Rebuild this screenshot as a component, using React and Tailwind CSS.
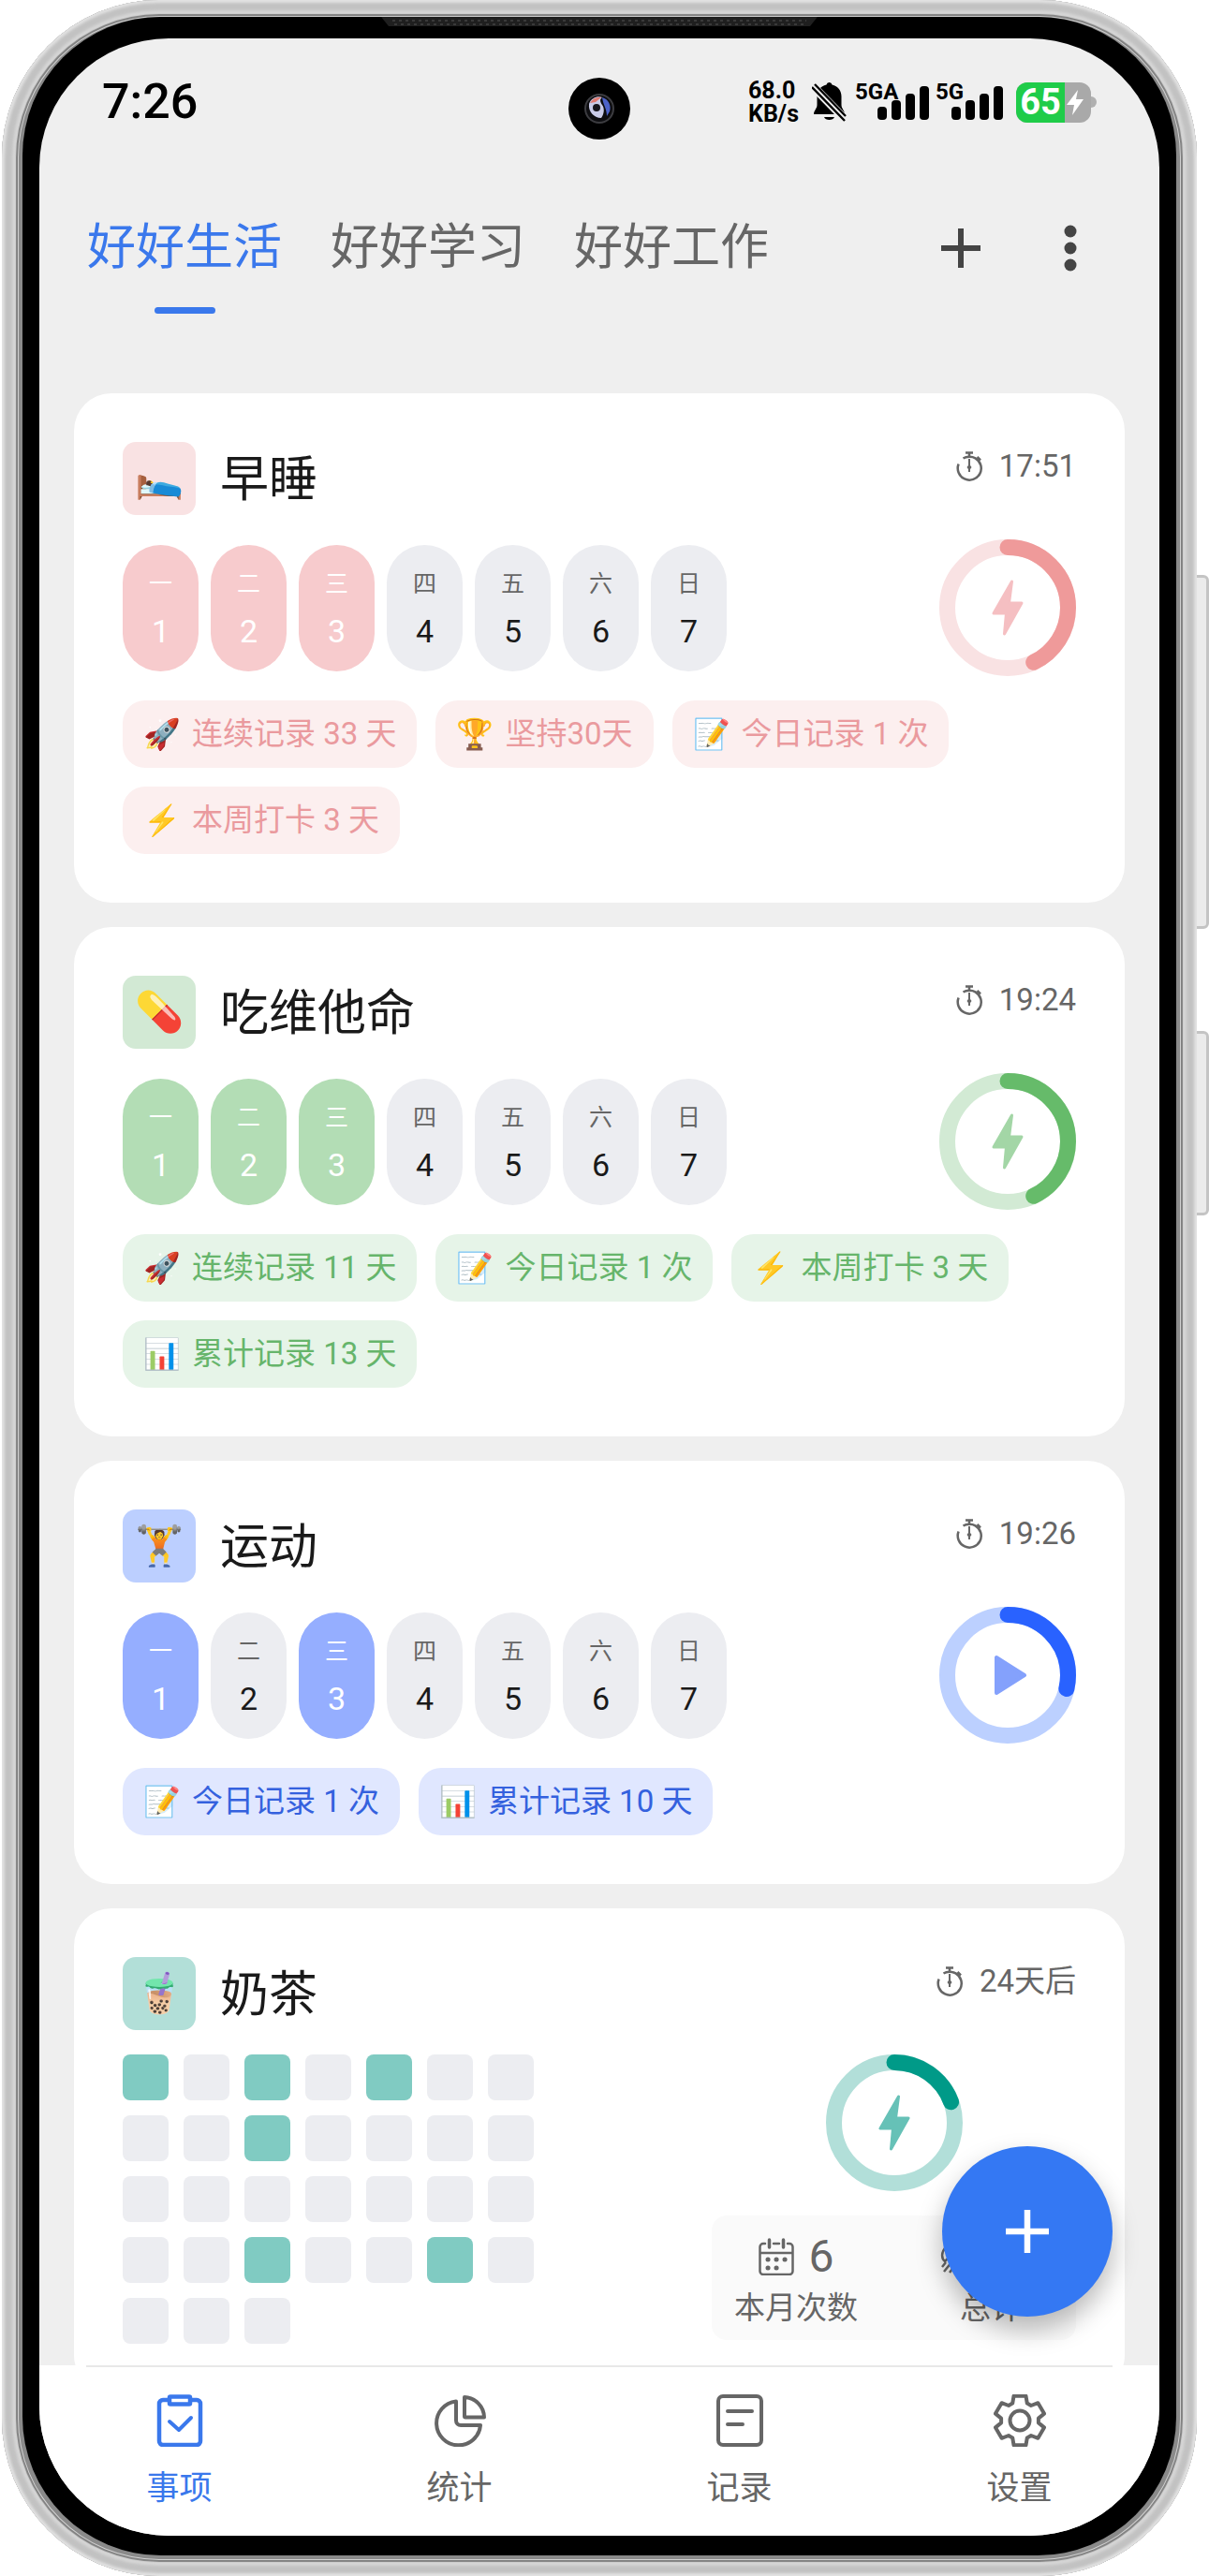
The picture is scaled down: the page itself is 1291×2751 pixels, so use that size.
import { useState } from 'react'

// Every theme carries the full set of classes and stroke colours for one habit card
const THEMES = {
  pink: {
    tile: 'bg-[#f9e2e3]',
    pill: 'bg-[#f7cbcd]',
    chip: 'bg-[#fcefef] text-[#ea9a9e]',
    track: '#f9e2e3',
    bar: '#ef9a9a',
    glyph: '#f5bfc2',
  },
  green: {
    tile: 'bg-[#d2e9d4]',
    pill: 'bg-[#b3ddb5]',
    chip: 'bg-[#e6f4e8] text-[#66b56b]',
    track: '#d2ead4',
    bar: '#66bb6a',
    glyph: '#a3d6a6',
  },
  blue: {
    tile: 'bg-[#bccfff]',
    pill: 'bg-[#95aeff]',
    chip: 'bg-[#e0e7ff] text-[#3461de]',
    track: '#bcd0ff',
    bar: '#2962ff',
    glyph: '#84a1fc',
  },
  teal: {
    tile: 'bg-[#b2dfd8]',
    pill: 'bg-[#80cbc2]',
    track: '#b2dfd9',
    bar: '#009a88',
    glyph: '#66c1b7',
  },
}

const WEEKDAYS = ['一', '二', '三', '四', '五', '六', '日']

const HABITS = [
  {
    name: '早睡',
    emoji: '🛌',
    theme: 'pink',
    timer: '17:51',
    done: [1, 2, 3],
    progress: 3 / 7,
    chips: [
      ['🚀', '连续记录 33 天'],
      ['🏆', '坚持30天'],
      ['📝', '今日记录 1 次'],
      ['⚡', '本周打卡 3 天'],
    ],
  },
  {
    name: '吃维他命',
    emoji: '💊',
    theme: 'green',
    timer: '19:24',
    done: [1, 2, 3],
    progress: 3 / 7,
    chips: [
      ['🚀', '连续记录 11 天'],
      ['📝', '今日记录 1 次'],
      ['⚡', '本周打卡 3 天'],
      ['📊', '累计记录 13 天'],
    ],
  },
  {
    name: '运动',
    emoji: '🏋️',
    theme: 'blue',
    timer: '19:26',
    done: [1, 3],
    progress: 2 / 7,
    play: true,
    chips: [
      ['📝', '今日记录 1 次'],
      ['📊', '累计记录 10 天'],
    ],
  },
]

// Month view: 31 days, these ones have a record
const MONTH_DONE = [1, 3, 5, 10, 24, 27]

const TABS = ['好好生活', '好好学习', '好好工作']

// Gear outline: six teeth, two outer and two inner points for each
const GEAR_POINTS = [0, 1, 2, 3, 4, 5]
  .flatMap((k) =>
    [[-23, 20], [-14, 27], [14, 27], [23, 20]].map(([offset, r]) => {
      const a = ((k * 60 - 90 + offset) * Math.PI) / 180
      return `${(28 + r * Math.cos(a)).toFixed(1)},${(28 + r * Math.sin(a)).toFixed(1)}`
    })
  )
  .join(' ')

function ClipboardIcon() {
  return (
    <svg className="size-14" viewBox="0 0 56 56" fill="none" stroke="currentColor" strokeWidth="4.5" strokeLinecap="round" strokeLinejoin="round">
      <path d="M16 6H10a4 4 0 0 0-4 4v40a4 4 0 0 0 4 4h36a4 4 0 0 0 4-4V10a4 4 0 0 0-4-4h-6" />
      <rect x="17" y="2.5" width="22" height="8" rx="1" />
      <path d="M17 29l10 9 13-13" strokeWidth="4" />
    </svg>
  )
}

function PieIcon() {
  return (
    <svg className="size-14" viewBox="0 0 56 56" fill="none" stroke="currentColor" strokeWidth="4" strokeLinejoin="round">
      <path d="M24 7.5A23.5 23.5 0 1 0 50 33H29a5 5 0 0 1-5-5z" />
      <path d="M33 3a22 22 0 0 1 21 21.5H34a1 1 0 0 1-1-1z" />
    </svg>
  )
}

function RecordIcon() {
  return (
    <svg className="size-14" viewBox="0 0 56 56" fill="none" stroke="currentColor" strokeWidth="4" strokeLinecap="round">
      <rect x="5" y="2" width="46" height="52" rx="5" />
      <path d="M15 18h26M15 32h16" />
    </svg>
  )
}

function GearIcon() {
  return (
    <svg className="size-14" viewBox="0 0 56 56" fill="none" stroke="currentColor" strokeWidth="4" strokeLinejoin="round">
      <polygon points={GEAR_POINTS} />
      <circle cx="28" cy="28" r="10.5" />
    </svg>
  )
}

const NAV = [
  { label: '事项', Icon: ClipboardIcon },
  { label: '统计', Icon: PieIcon },
  { label: '记录', Icon: RecordIcon },
  { label: '设置', Icon: GearIcon },
]

function TimerIcon() {
  return (
    <svg className="h-8 w-7" viewBox="0 0 28 32" fill="none" stroke="currentColor" strokeWidth="2.5">
      <path d="M2.6 13.5A12.5 12.5 0 1 0 20.5 7.3C17 5.3 11 5.3 7.5 7.5" />
      <path d="M10 1.5h8M14 1.5v5M22.5 6l3.5 3.5" />
      <path d="M14 8v14" strokeWidth="2" />
      <path d="M14 13.5l2.5 3.5-2.5 3.5-2.5-3.5z" fill="currentColor" stroke="none" />
    </svg>
  )
}

function BellOffIcon() {
  return (
    <svg className="h-[42px] w-[37px]" viewBox="0 0 37 42">
      <path d="M18.5 0a3 3 0 0 1 3 2.5C28 4 31.5 9 31.5 15v9c0 4 3.5 6 3.5 10H2c0-4 3.5-6 3.5-10v-9C5.5 9 9 4 15.500 2.5a3 3 0 0 1 3-2.500zM13 37h11c-1 4-10 4-11 0z" />
      <path d="M0 3l37 38" stroke="#efefef" strokeWidth="9" />
      <path d="M0 5l35 36M3 2l33 34" stroke="#000" strokeWidth="2.4" />
    </svg>
  )
}

function Signal({ label, wide }) {
  return (
    <div className={`relative flex h-[38px] items-end justify-end gap-[5px] ${wide ? 'w-[79px]' : 'w-[72px]'}`}>
      <span className="absolute -top-1 left-0 text-2xl leading-6 font-bold">{label}</span>
      <span className="h-[14px] w-[10px] rounded-[4px] bg-black" />
      <span className="h-[21px] w-[10px] rounded-[4px] bg-black" />
      <span className="h-[28px] w-[10px] rounded-[4px] bg-black" />
      <span className="h-9 w-[10px] rounded-[4px] bg-black" />
    </div>
  )
}

function StatusBar() {
  return (
    <div className="flex h-[136px] shrink-0 items-center justify-between px-[67px] text-black">
      <span className="text-[52px] leading-none font-medium">7:26</span>
      <div className="flex items-center">
        <div className="mr-3 w-14 text-[25px] leading-[25px] font-bold">
          <div>68.0</div>
          <div>KB/s</div>
        </div>
        <div className="mr-[9px]"><BellOffIcon /></div>
        <div className="mr-[7px]"><Signal label="5GA" wide /></div>
        <Signal label="5G" />
        <div className="ml-[14px] flex items-center">
          <div className="flex h-[43px] w-20 overflow-hidden rounded-xl bg-[#a9a9a9]">
            <span className="flex w-[52px] items-center justify-center bg-[#1fcc49] text-[38px] leading-none font-bold text-white">65</span>
            <svg className="h-[43px] w-7" viewBox="0 0 28 43" fill="#fff">
              <path d="M14 8L2 24h8l-2 11 12-17h-8z" />
            </svg>
          </div>
          <span className="h-3 w-[6px] rounded-r-full bg-[#b0b0b0]" />
        </div>
      </div>
    </div>
  )
}

function Camera() {
  return (
    <svg className="absolute top-[42px] left-1/2 size-[66px] -translate-x-1/2" viewBox="0 0 66 66">
      <circle cx="33" cy="33" r="33" fill="#000" />
      <circle cx="33" cy="33" r="15" fill="#0d0d10" stroke="#3c3c40" strokeWidth="2" />
      <path d="M22 28c2-7 10-9 14-7-3 2-2 5 0 8 3 4 2 10-1 14-8 0-14-7-13-15z" fill="#c9cbe8" />
      <path d="M23 27c3-5 8-7 12-6l-6 5z" fill="#e07a70" />
      <path d="M36 21c7 2 10 9 8 15l-3 5c0-8-4-12-5-20z" fill="#4c62c8" />
      <circle cx="30" cy="32" r="4" fill="#17151c" />
    </svg>
  )
}

function Ring({ theme, progress, play }) {
  const r = 64.5
  const length = 2 * Math.PI * r
  return (
    <button type="button" aria-label="打卡" className="size-[146px] shrink-0">
      <svg className="size-full" viewBox="0 0 146 146" fill="none">
        <circle cx="73" cy="73" r={r} stroke={theme.track} strokeWidth="17" />
        <circle
          cx="73"
          cy="73"
          r={r}
          stroke={theme.bar}
          strokeWidth="17"
          strokeLinecap="round"
          strokeDasharray={`${length * progress} ${length}`}
          transform="rotate(-90 73 73)"
        />
        {play ? (
          <path d="M61 54v38l30-19z" fill={theme.glyph} stroke={theme.glyph} strokeWidth="4" strokeLinejoin="round" />
        ) : (
          <path d="M77.500 45L58 79h13.500l-2 22L88 68H74.500z" fill={theme.glyph} stroke={theme.glyph} strokeWidth="3" strokeLinejoin="round" />
        )}
      </svg>
    </button>
  )
}

function CardHeader({ emoji, name, timer, theme }) {
  return (
    <div className="flex items-start justify-between">
      <div className="flex items-center gap-[26px]">
        <span className={`flex size-[78px] items-center justify-center rounded-[14px] text-[42px] leading-none ${theme.tile}`}>{emoji}</span>
        <h2 className="pt-1 text-[52px] leading-[74px] text-[#1a1a1a]">{name}</h2>
      </div>
      <div className="flex items-center gap-[18px] text-[33px] leading-[52px] text-[#666]">
        <TimerIcon />
        {timer}
      </div>
    </div>
  )
}

function HabitCard({ habit }) {
  const theme = THEMES[habit.theme]
  return (
    <section className="shrink-0 rounded-[40px] bg-white p-[52px]">
      <CardHeader emoji={habit.emoji} name={habit.name} timer={habit.timer} theme={theme} />
      <div className="my-[26px] flex items-center justify-between">
        <div className="flex gap-[13px]">
          {WEEKDAYS.map((day, i) => {
            const done = habit.done.includes(i + 1)
            return (
              <div
                key={day}
                className={`flex h-[135px] w-[81px] flex-col items-center justify-center gap-3 rounded-full pt-[2px] ${done ? theme.pill : 'bg-[#ecedf1]'}`}
              >
                <span className={`text-[25px] leading-9 ${done ? 'text-white' : 'text-[#666]'}`}>{day}</span>
                <span className={`text-[34px] leading-10 ${done ? 'text-white' : 'text-[#1a1a1a]'}`}>{i + 1}</span>
              </div>
            )
          })}
        </div>
        <Ring theme={theme} progress={habit.progress} play={habit.play} />
      </div>
      <ul className="flex flex-wrap gap-5">
        {habit.chips.map(([emoji, text]) => (
          <li key={text} className={`flex h-[72px] items-center gap-3 rounded-3xl px-[22px] text-[33px] leading-[52px] ${theme.chip}`}>
            <span className="flex w-10 justify-center text-[32px]">{emoji}</span>
            {text}
          </li>
        ))}
      </ul>
    </section>
  )
}

function MonthCard() {
  const theme = THEMES.teal
  return (
    <section className="shrink-0 rounded-[40px] bg-white p-[52px]">
      <CardHeader emoji="🧋" name="奶茶" timer="24天后" theme={theme} />
      <div className="mt-[26px] flex items-start justify-between">
        <div className="grid grid-cols-7 gap-4">
          {Array.from({ length: 31 }, (_, i) => (
            <span key={i} className={`size-[49px] rounded-lg ${MONTH_DONE.includes(i + 1) ? theme.pill : 'bg-[#ecedf1]'}`} />
          ))}
        </div>
        <div className="flex flex-col items-center gap-[26px]">
          <Ring theme={theme} progress={6 / 31} />
          <div className="flex h-[133px] w-[389px] gap-[88px] rounded-2xl bg-[#fafafa] px-6 pt-4 text-[#666]">
            <div className="flex flex-col items-center">
              <div className="flex items-center gap-4 text-5xl leading-[56px]">
                <svg className="h-10 w-[38px]" viewBox="0 0 38 40" fill="none" stroke="currentColor" strokeWidth="2.5" strokeLinecap="round">
                  <path d="M7 6H5a3.5 3.5 0 0 0-3.5 3.5v26A3.5 3.5 0 0 0 5 39h28a3.5 3.5 0 0 0 3.5-3.5v-26A3.5 3.5 0 0 0 33 6h-2M16 6h6M1.5 16h35" />
                  <path d="M11.500 2v8M26.500 2v8" strokeWidth="3.5" />
                  <path d="M10 23h.1M19 23h.1M28 23h.1M10 32h.1M19 32h.1" strokeWidth="5" />
                </svg>
                6
              </div>
              <span className="text-[33px] leading-[54px]">本月次数</span>
            </div>
            <div className="flex flex-col items-center">
              <div className="flex items-center gap-4 text-5xl leading-[56px]">
                <svg className="h-10 w-[38px]" viewBox="0 0 38 40" fill="none" stroke="currentColor" strokeWidth="2.5">
                  <path d="M6 10c-5 5-5 12-1 15l6-6M2 31l4-5M4 36l8-10M10 37l6-8" />
                </svg>
                13
              </div>
              <span className="text-[33px] leading-[54px]">总计</span>
            </div>
          </div>
        </div>
      </div>
    </section>
  )
}

export default function App() {
  const [tab, setTab] = useState(0)
  const [page, setPage] = useState(0)

  return (
    <div className="relative h-screen overflow-hidden bg-white pr-[13px] pl-[2px] font-[Roboto,'Noto_Sans_CJK_SC',sans-serif]">
      {/* Side keys, half hidden behind the frame */}
      <div className="absolute top-[614px] right-0 h-[378px] w-5 rounded-[6px] border-3 border-[#c4c4c4] bg-[#ebebeb]" />
      <div className="absolute top-[1101px] right-0 h-[197px] w-5 rounded-[6px] border-3 border-[#c4c4c4] bg-[#ebebeb]" />

      {/* Metal frame, bezel, screen */}
      <div className="relative h-full rounded-[168px] bg-[#8a8a8a] px-[22px] pt-[18px] pb-[22px] shadow-[inset_0_0_3px_3px_#e2e2e2,inset_0_0_3px_11px_#c2c2c2,inset_0_0_1px_15px_#d6d6d6,inset_0_0_0_17px_#808080,inset_0_0_0_18px_#d0d0d0]">
        <div className="relative h-full rounded-[148px] bg-black px-[18px] pt-[23px] pb-[21px]">
          <svg className="absolute top-0 left-1/2 h-[11px] w-[466px] -translate-x-1/2" viewBox="0 0 466 11">
            <path d="M0 0h466l-8 10H8z" fill="#1f1f1f" />
            <path d="M12 4h442M14 8h438" stroke="#3a3a3a" strokeWidth="2" strokeDasharray="3 4" />
          </svg>

          <main className="relative flex h-full flex-col overflow-hidden rounded-[138px] bg-[#efefef]">
            <StatusBar />
            <Camera />

            <header className="flex shrink-0 items-start pt-[49px] pr-[56px] pl-[51px] pb-[85px]">
              <div className="flex gap-[52px]">
                {TABS.map((name, i) => (
                  <button
                    key={name}
                    type="button"
                    onClick={() => setTab(i)}
                    className={`flex flex-col items-center gap-6 text-[52px] leading-[78px] ${tab === i ? 'text-[#3a78ec]' : 'text-[#666]'}`}
                  >
                    {name}
                    <span className={`h-[7px] w-[65px] rounded-full ${tab === i ? 'bg-[#3a78ec]' : ''}`} />
                  </button>
                ))}
              </div>
              <div className="ml-auto flex gap-[39px] text-[#444]">
                <button type="button" aria-label="添加" className="flex size-[78px] items-center justify-center">
                  <svg className="size-[42px]" viewBox="0 0 42 42" stroke="currentColor" strokeWidth="6">
                    <path d="M21 0v42M0 21h42" />
                  </svg>
                </button>
                <button type="button" aria-label="更多" className="flex size-[78px] items-center justify-center">
                  <svg className="size-[50px]" viewBox="0 0 50 50" fill="currentColor">
                    <circle cx="25" cy="7" r="6.5" />
                    <circle cx="25" cy="25" r="6.5" />
                    <circle cx="25" cy="43" r="6.5" />
                  </svg>
                </button>
              </div>
            </header>

            <div className="flex min-h-0 flex-1 flex-col gap-[26px] overflow-hidden px-[37px]">
              {HABITS.map((habit) => (
                <HabitCard key={habit.name} habit={habit} />
              ))}
              <MonthCard />
            </div>

            <nav className="relative shrink-0 bg-white pb-[23px]">
              <div className="mx-[50px] h-[2px] bg-[#e8e8e8]" />
              <div className="grid grid-cols-4 pt-[29px]">
                {NAV.map(({ label, Icon }, i) => (
                  <button
                    key={label}
                    type="button"
                    onClick={() => setPage(i)}
                    className={`flex flex-col items-center gap-[18px] text-[35px] leading-[54px] ${page === i ? 'text-[#3a78ec]' : 'text-[#666]'}`}
                  >
                    <Icon />
                    {label}
                  </button>
                ))}
              </div>
            </nav>

            <button
              type="button"
              aria-label="新建事项"
              className="absolute right-[50px] bottom-[234px] flex size-[182px] items-center justify-center rounded-full bg-[#3478f3] shadow-[0_14px_28px_rgba(0,0,0,0.28)]"
            >
              <svg className="size-[46px]" viewBox="0 0 46 46" stroke="#fff" strokeWidth="6.5">
                <path d="M23 0v46M0 23h46" />
              </svg>
            </button>
          </main>
        </div>
      </div>
    </div>
  )
}
